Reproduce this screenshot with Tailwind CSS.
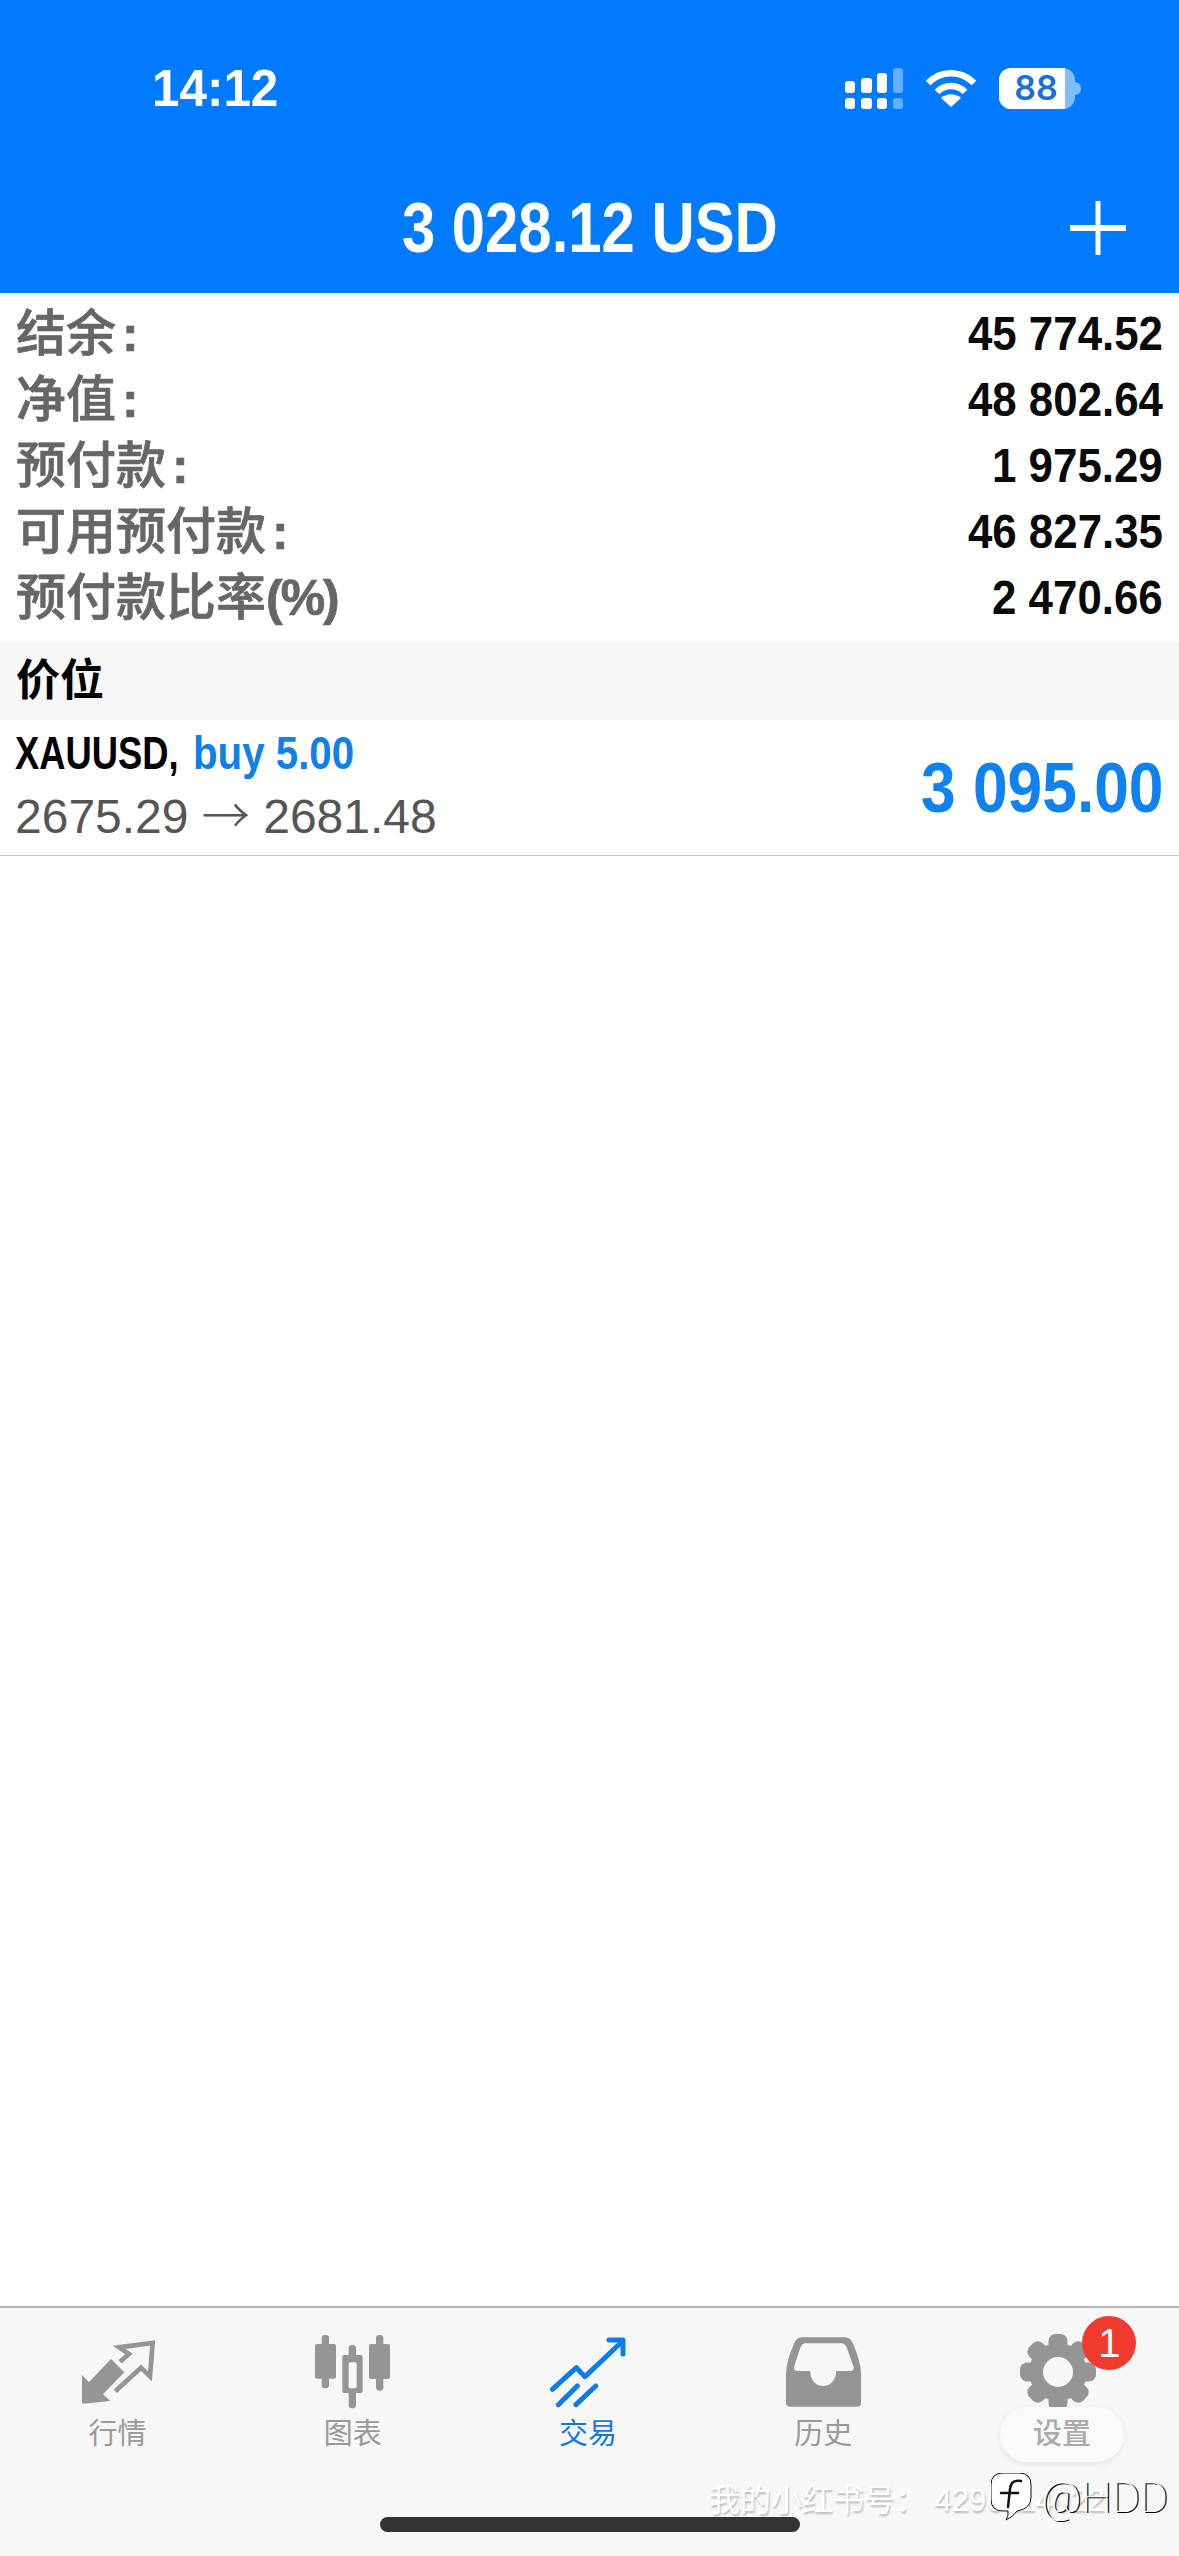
<!DOCTYPE html>
<html lang="zh">
<head>
    <meta charset="UTF-8">
    <meta name="viewport" content="width=device-width, initial-scale=1.0">
    <title>交易</title>
    <script src="https://cdn.jsdelivr.net/npm/@tailwindcss/browser@4"></script>
</head>
<body class="bg-white font-['Liberation_Sans','Noto_Sans_CJK_SC',sans-serif]">
<div class="relative w-[1179px] h-[2556px] flex flex-col overflow-hidden bg-white">

    <!-- header -->
    <header class="h-[293px] shrink-0 bg-[#007aff] text-white flex flex-col">
        <div class="h-[176px] flex items-center justify-between pl-[152px] pr-[98px]">
            <span class="text-[52px] leading-none font-bold origin-left scale-x-[0.95]">14:12</span>
            <div class="flex items-center gap-[23px]">
                <svg width="58" height="41" viewBox="0 0 58 41" fill="#fff">
                    <rect x="0" y="13" width="10" height="12" rx="3"/>
                    <rect x="16" y="10" width="11" height="15" rx="3"/>
                    <rect x="32" y="5" width="10" height="20" rx="3"/>
                    <rect x="48" y="0" width="10" height="25" rx="3" opacity=".4"/>
                    <rect x="0" y="30" width="10" height="11" rx="3"/>
                    <rect x="16" y="30" width="11" height="11" rx="3"/>
                    <rect x="32" y="30" width="10" height="11" rx="3"/>
                    <rect x="48" y="30" width="10" height="11" rx="3" opacity=".4"/>
                </svg>
                <svg width="50" height="38" viewBox="0 0 50 38" fill="none" stroke="#fff" stroke-width="6.5">
                    <path d="M2 14C15 1 35 1 48 14"/>
                    <path d="M11 23C19 15 31 15 39 23"/>
                    <path d="M25 38L15 29C21 24 29 24 35 29Z" fill="#fff" stroke="none"/>
                </svg>
                <div class="flex items-center">
                    <div class="w-[76px] h-[41px] rounded-[12px] bg-white/50 overflow-hidden relative">
                        <div class="w-[66px] h-full bg-white flex items-center justify-center">
                            <span class="font-['Inter'] text-[34px] leading-none font-semibold text-[#1b6fd6] ml-[8px]">88</span>
                        </div>
                    </div>
                    <div class="w-[6px] h-[13px] rounded-r-full bg-white/50"></div>
                </div>
            </div>
        </div>
        <div class="h-[104px] grid grid-cols-[1fr_auto_1fr] items-center">
            <div></div>
            <h1 class="text-[70px] leading-none font-bold scale-x-[0.855] whitespace-nowrap">3 028.12 USD</h1>
            <div class="flex justify-end pr-[53px]">
                <svg width="56" height="54" viewBox="0 0 56 54" fill="#fff">
                    <rect x="25.5" y="0" width="5" height="54"/>
                    <rect x="0" y="24" width="56" height="6"/>
                </svg>
            </div>
        </div>
    </header>

    <!-- account summary -->
    <section class="h-[349px] shrink-0 pt-[8px] pl-[16px] pr-[16px] flex flex-col">
        <div class="h-[66px] flex items-center justify-between">
            <span class="text-[50px] leading-none font-medium [-webkit-text-stroke:0.7px_#666] text-[#666]">结余<span class="ml-[6px] font-bold">:</span></span>
            <span class="text-[49px] leading-none font-bold text-[#0a0a0a] origin-right scale-x-[0.895] pb-[2px]">45 774.52</span>
        </div>
        <div class="h-[66px] flex items-center justify-between">
            <span class="text-[50px] leading-none font-medium [-webkit-text-stroke:0.7px_#666] text-[#666]">净值<span class="ml-[6px] font-bold">:</span></span>
            <span class="text-[49px] leading-none font-bold text-[#0a0a0a] origin-right scale-x-[0.895] pb-[2px]">48 802.64</span>
        </div>
        <div class="h-[66px] flex items-center justify-between">
            <span class="text-[50px] leading-none font-medium [-webkit-text-stroke:0.7px_#666] text-[#666]">预付款<span class="ml-[6px] font-bold">:</span></span>
            <span class="text-[49px] leading-none font-bold text-[#0a0a0a] origin-right scale-x-[0.895] pb-[2px]">1 975.29</span>
        </div>
        <div class="h-[66px] flex items-center justify-between">
            <span class="text-[50px] leading-none font-medium [-webkit-text-stroke:0.7px_#666] text-[#666]">可用预付款<span class="ml-[6px] font-bold">:</span></span>
            <span class="text-[49px] leading-none font-bold text-[#0a0a0a] origin-right scale-x-[0.895] pb-[2px]">46 827.35</span>
        </div>
        <div class="h-[66px] flex items-center justify-between">
            <span class="text-[50px] leading-none font-medium [-webkit-text-stroke:0.7px_#666] text-[#666]">预付款比率<span class="font-bold tracking-[-2px]">(%)</span></span>
            <span class="text-[49px] leading-none font-bold text-[#0a0a0a] origin-right scale-x-[0.895] pb-[2px]">2 470.66</span>
        </div>
    </section>

    <!-- positions -->
    <div class="h-[78px] shrink-0 bg-[#f7f7f7] flex items-center pl-[16px]">
        <span class="text-[44px] leading-none font-bold text-black">价位</span>
    </div>
    <div class="h-[136px] shrink-0 border-b border-[#c8c8c8] flex items-center justify-between pl-[15px] pr-[16px]">
        <div class="flex flex-col gap-[9px] pb-[5px]">
            <div class="flex text-[46px] leading-[50px] font-bold whitespace-nowrap">
                <span class="w-[178px] text-black origin-left scale-x-[0.79]">XAUUSD,</span>
                <span class="text-[#0f7fec] origin-left scale-x-[0.875]">buy 5.00</span>
            </div>
            <div class="text-[48px] leading-[50px] text-[#555] whitespace-nowrap">2675.29 <span class="font-['Noto_Sans_CJK_SC'] font-light">→</span> 2681.48</div>
        </div>
        <span class="text-[70px] leading-none font-bold text-[#0f82f0] origin-right scale-x-[0.89] whitespace-nowrap">3 095.00</span>
    </div>

    <div class="flex-1"></div>

    <!-- tab bar -->
    <nav class="h-[250px] shrink-0 bg-[#f7f7f7] border-t-2 border-[#b8b8b8] pr-[3px] grid grid-cols-5 text-[29px] leading-none text-[#999]">
        <div class="flex flex-col items-center pt-[24px]">
            <div class="h-[80px] flex items-center justify-center">
                <svg width="74" height="66" viewBox="60 60 222 198">
                    <path d="M63 168L84 190L150 120L190 160L126 226L148 246L68 254Q63 254 63 248Z" fill="#959595"/>
                    <path d="M163 217L240 146L267 172L275 72L174 85L204 105L177 128" fill="none" stroke="#959595" stroke-width="14"/>
                </svg>
            </div>
            <span class="mt-[8px]">行情</span>
        </div>
        <div class="flex flex-col items-center pt-[24px]">
            <div class="h-[80px] flex items-center justify-center">
                <svg width="75" height="74" viewBox="765 48 225 222" fill="#959595">
                    <rect x="785" y="48" width="22" height="160" rx="10"/>
                    <rect x="765" y="75" width="63" height="104" rx="6"/>
                    <rect x="866" y="78" width="22" height="190" rx="10"/>
                    <rect x="847" y="108" width="61" height="114" rx="6"/>
                    <rect x="866" y="130" width="24" height="78" rx="5" fill="#f7f7f7"/>
                    <rect x="948" y="48" width="22" height="167" rx="10"/>
                    <rect x="927" y="75" width="63" height="105" rx="6"/>
                </svg>
            </div>
            <span class="mt-[8px]">图表</span>
        </div>
        <div class="flex flex-col items-center pt-[24px] text-[#1279e3]">
            <div class="h-[80px] flex items-center justify-center">
                <svg width="78" height="72" viewBox="60 50 234 216" fill="none" stroke="#0d7bec" stroke-width="15" stroke-linecap="round" stroke-linejoin="round">
                    <path d="M70 210L142 145L168 172L278 68"/>
                    <path d="M240 62L282 62L282 104"/>
                    <path d="M88 256L145 200"/>
                    <path d="M141 256L200 200"/>
                </svg>
            </div>
            <span class="mt-[8px]">交易</span>
        </div>
        <div class="flex flex-col items-center pt-[24px]">
            <div class="h-[80px] flex items-center justify-center">
                <svg width="75" height="70" viewBox="768 57 224 208">
                    <path d="M815 57H945Q960 57 968 76Q992 130 992 170V253Q992 265 980 265H780Q768 265 768 253V170Q768 130 792 76Q800 57 815 57Z" fill="#959595"/>
                    <path d="M826 75H934Q944 75 950 90L970 146Q972 158 960 158H918C916 218 842 218 840 158H802Q790 158 792 146L810 90Q816 75 826 75Z" fill="#f7f7f7"/>
                </svg>
            </div>
            <span class="mt-[8px]">历史</span>
        </div>
        <div class="flex flex-col items-center pt-[24px] relative">
            <div class="h-[80px] flex items-center justify-center relative">
                <svg width="76" height="76" viewBox="-38 -38 76 76" fill="#959595">
                    <circle r="29"/>
                    <rect x="-9.5" y="-38" width="19" height="76" rx="7"/>
                    <rect x="-9.5" y="-38" width="19" height="76" rx="7" transform="rotate(45)"/>
                    <rect x="-9.5" y="-38" width="19" height="76" rx="7" transform="rotate(90)"/>
                    <rect x="-9.5" y="-38" width="19" height="76" rx="7" transform="rotate(135)"/>
                    <circle r="15" fill="#f7f7f7"/>
                </svg>
                <div class="absolute left-[62px] top-[-16px] w-[54px] h-[54px] rounded-full bg-[#f03a2e] text-white text-[40px] flex items-center justify-center">1</div>
            </div>
            <span class="mt-[8px]">设置</span>
        </div>
    </nav>

    <!-- watermark overlays -->
    <div class="absolute left-[1000px] top-[2407px] w-[124px] h-[55px] rounded-full bg-[#fafafa] shadow-[0_2px_6px_rgba(0,0,0,0.08)] flex items-center justify-center text-[29px] text-[#aaa] font-medium">设置</div>
    <div class="absolute left-[709px] top-[2484px] text-[31px] leading-[34px] text-white whitespace-nowrap [text-shadow:1px_2px_2px_rgba(0,0,0,0.25)]">我的小红书号： 4296114022</div>
    <div class="absolute left-[380px] top-[2517px] w-[420px] h-[15px] rounded-full bg-[#333]"></div>
    <div class="absolute left-[991px] top-[2473px] flex items-center gap-[8px]">
        <svg width="42" height="48" viewBox="0 0 42 48">
            <path d="M12 0H28Q40 0 40 12V24Q40 36 26 38Q22 44 15 47Q18 42 17 38H12Q0 38 0 26V12Q0 0 12 0Z" fill="#fff" stroke="#111" stroke-width="1"/>
            <path d="M30 8Q20 6 19 16L17 34M10 20H27" fill="none" stroke="#111" stroke-width="2.5" stroke-linecap="round"/>
        </svg>
        <span class="font-['Roboto'] font-thin text-[43px] leading-none text-white [text-shadow:2px_1px_0_#000]">@HDD</span>
    </div>
</div>
</body>
</html>
